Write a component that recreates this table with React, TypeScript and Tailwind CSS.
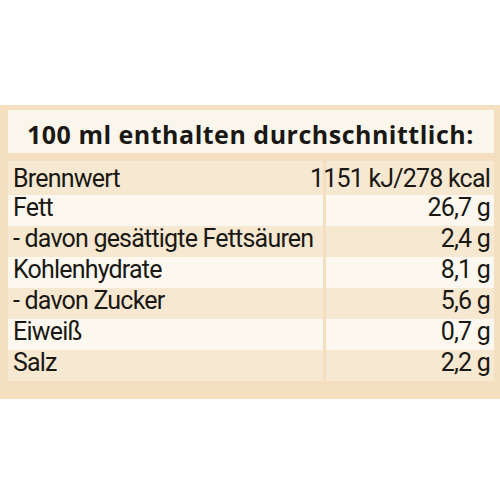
const rows: { label: string; value: string }[] = [
  { label: 'Brennwert', value: '1151 kJ/278 kcal' },
  { label: 'Fett', value: '26,7 g' },
  { label: '- davon gesättigte Fettsäuren', value: '2,4 g' },
  { label: 'Kohlenhydrate', value: '8,1 g' },
  { label: '- davon Zucker', value: '5,6 g' },
  { label: 'Eiweiß', value: '0,7 g' },
  { label: 'Salz', value: '2,2 g' },
];

export default function App() {
  return (
    <div className="w-[500px] h-[500px] bg-white pt-[105px] font-['Roboto',sans-serif] text-[#1a1814]">
      <div className="bg-[#f4dfc1] pl-[8px] pr-[6px] pt-[5px] pb-[18px]">
        <div className="h-[43px] bg-[#fbf6ec] flex items-center pl-[19px] pt-[6px] font-['Open_Sans',sans-serif] text-[25px] font-bold tracking-[0.5px] whitespace-nowrap">
          100 ml enthalten durchschnittlich:
        </div>
        <div className="mt-[8px] grid grid-cols-[1fr_168px] gap-x-[3px]">
          {rows.map((row, i) => {
            const bg = i % 2 === 0 ? 'bg-[#f7e8d1]' : 'bg-[#fcf8ef]';
            const h = i === 0 ? 'h-[34px] pt-[2px]' : 'h-[31px] pb-[5px]';
            return (
              <div key={row.label} className="contents">
                <div className={`${bg} ${h} flex items-center pl-[5px] text-[25px] tracking-[-0.8px] whitespace-nowrap`}>
                  {row.label}
                </div>
                <div className={`${bg} ${h} flex items-center justify-end pr-[4px] text-[25px] tracking-[-0.8px] whitespace-nowrap`}>
                  {row.value}
                </div>
              </div>
            );
          })}
        </div>
      </div>
    </div>
  );
}
